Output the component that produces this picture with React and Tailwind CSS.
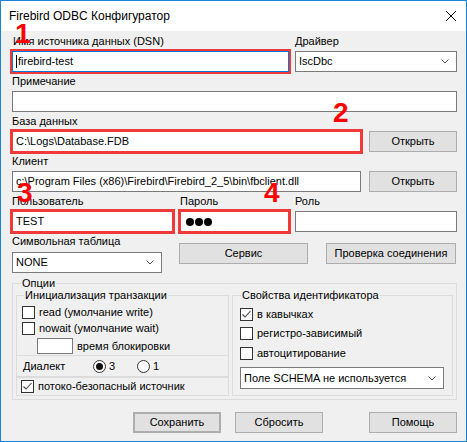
import React from "react";

const Label = ({ children, className = "" }) => (
  <div className={`h-[13px] leading-[13px] whitespace-nowrap ${className}`}>{children}</div>
);

const TextBox = ({ children, className = "" }) => (
  <div
    className={`h-[21px] bg-white border border-[#7a7a7a] pl-[3px] flex items-center whitespace-nowrap overflow-hidden ${className}`}
  >
    {children}
  </div>
);

const Button = ({ children, className = "" }) => (
  <div
    className={`h-[21px] bg-[#e1e1e1] border border-[#adadad] flex items-center justify-center whitespace-nowrap ${className}`}
  >
    {children}
  </div>
);

const Chevron = () => (
  <svg width="8" height="5" viewBox="0 0 8 5">
    <path d="M0.5 0.5 L4 4 L7.5 0.5" fill="none" stroke="#555" strokeWidth="1" />
  </svg>
);

const Select = ({ value, className = "" }) => (
  <div
    className={`h-[21px] bg-white border border-[#7a7a7a] pl-[3px] pr-[7px] flex items-center justify-between ${className}`}
  >
    <span>{value}</span>
    <Chevron />
  </div>
);

const Checkbox = ({ checked }) => (
  <div className="w-[13px] h-[13px] shrink-0 border border-[#333] bg-white flex items-center justify-center">
    {checked && (
      <svg width="11" height="11" viewBox="0 0 11 11">
        <path d="M1.5 5.5 L4 8 L9.5 2" fill="none" stroke="#444" strokeWidth="1.1" />
      </svg>
    )}
  </div>
);

const Radio = ({ checked }) => (
  <div className="w-[13px] h-[13px] shrink-0 rounded-full border border-[#333] bg-white flex items-center justify-center">
    {checked && <div className="w-[7px] h-[7px] rounded-full bg-[#111]" />}
  </div>
);

const Check = ({ checked, children }) => (
  <div className="h-[13px] flex items-center gap-[4px] leading-[13px] whitespace-nowrap">
    <Checkbox checked={checked} />
    <span>{children}</span>
  </div>
);

const Marker = ({ n, className }) => (
  <span
    className={`absolute text-[28px] leading-[28px] font-bold text-[#ff0000] font-['Liberation_Sans',Arial,sans-serif] ${className}`}
  >
    {n}
  </span>
);

export default function App() {
  return (
    <div className="relative w-[467px] h-[442px] border border-[#1883d7] flex flex-col text-[11px] text-black font-['Liberation_Sans',Arial,sans-serif] overflow-hidden">
      {/* Title bar */}
      <div className="h-[30px] shrink-0 bg-white flex items-center justify-between pl-[8px] pr-[10px]">
        <span className="text-[12px]">Firebird ODBC Конфигуратор</span>
        <svg width="10" height="10" viewBox="0 0 10 10">
          <path d="M0 0 L10 10 M10 0 L0 10" stroke="#000" strokeWidth="1" />
        </svg>
      </div>

      {/* Body */}
      <div className="flex-1 bg-[#f0f0f0] pl-[11px] pr-[9px] pt-[4px]">
        <div className="flex flex-col gap-[3px]">
          <div className="flex gap-[6px]">
            <div className="w-[277px]">
              <Label className="pl-px">Имя источника данных (DSN)</Label>
              <TextBox className="mt-[3px] border-[#0078d7] outline-2 outline-[#f03a3a]">
                <span className="w-px h-[13px] bg-black mr-px" />
                firebird-test
              </TextBox>
            </div>
            <div className="flex-1">
              <Label>Драйвер</Label>
              <Select className="mt-[3px]" value="IscDbc" />
            </div>
          </div>

          <div>
            <Label>Примечание</Label>
            <TextBox className="mt-[3px]" />
          </div>

          <div>
            <Label>База данных</Label>
            <div className="mt-[3px] flex gap-[8px]">
              <TextBox className="flex-1 outline-[3px] outline-[#f03a3a] -outline-offset-1">
                {"C:\\Logs\\Database.FDB"}
              </TextBox>
              <Button className="w-[88px]">Открыть</Button>
            </div>
          </div>

          <div>
            <Label>Клиент</Label>
            <div className="mt-[3px] flex gap-[8px]">
              <TextBox className="flex-1">
                {"c:\\Program Files (x86)\\Firebird\\Firebird_2_5\\bin\\fbclient.dll"}
              </TextBox>
              <Button className="w-[88px]">Открыть</Button>
            </div>
          </div>

          <div className="flex">
            <div className="w-[161px]">
              <Label>Пользователь</Label>
              <TextBox className="mt-[3px] outline-[3px] outline-[#f03a3a] -outline-offset-1">TEST</TextBox>
            </div>
            <div className="w-[109px] ml-[7px]">
              <Label>Пароль</Label>
              <TextBox className="mt-[3px] pl-[5px] gap-[1px] outline-[3px] outline-[#f03a3a] -outline-offset-1">
                <span className="w-[8px] h-[8px] rounded-full bg-black" />
                <span className="w-[8px] h-[8px] rounded-full bg-black" />
                <span className="w-[8px] h-[8px] rounded-full bg-black" />
              </TextBox>
            </div>
            <div className="flex-1 ml-[6px]">
              <Label>Роль</Label>
              <TextBox className="mt-[3px]" />
            </div>
          </div>

          <div className="flex items-start">
            <div className="w-[150px]">
              <Label>Символьная таблица</Label>
              <Select className="mt-[4px]" value="NONE" />
            </div>
            <Button className="ml-[17px] w-[129px] mt-[8px]">Сервис</Button>
            <Button className="ml-[18px] w-[130px] mt-[8px]">Проверка соединения</Button>
          </div>
        </div>

        {/* Options */}
        <fieldset className="mt-[4px] border border-[#dcdcdc]">
          <legend className="ml-[8px] px-px leading-[13px]">Опции</legend>
          <div className="-mt-px px-[3px] pb-[3px] flex gap-[3px]">
            <div className="w-[213px] flex flex-col">
              <fieldset className="border border-[#dcdcdc]">
                <legend className="ml-[7px] px-px leading-[13px]">Инициализация транзакции</legend>
                <div className="pl-[5px] pt-[4px] pb-[1px] flex flex-col gap-[3px]">
                  <Check>read (умолчание write)</Check>
                  <Check>nowait (умолчание wait)</Check>
                  <div className="h-[16px] flex items-center">
                    <div className="ml-[15px] w-[36px] h-[16px] bg-white border border-[#7a7a7a]" />
                    <span className="ml-[4px]">время блокировки</span>
                  </div>
                </div>
              </fieldset>
              <div className="h-[21px] border-x border-b border-[#dcdcdc] flex items-center pl-[6px]">
                <span className="w-[70px]">Диалект</span>
                <div className="w-[44px] flex items-center gap-[3px]">
                  <Radio checked />
                  <span>3</span>
                </div>
                <div className="flex items-center gap-[3px]">
                  <Radio />
                  <span>1</span>
                </div>
              </div>
              <div className="h-[19px] border border-[#dcdcdc] flex items-center pl-[4px]">
                <Check checked>потоко-безопасный источник</Check>
              </div>
            </div>

            <fieldset className="flex-1 border border-[#dcdcdc]">
              <legend className="ml-[8px] px-px leading-[13px]">Свойства идентификатора</legend>
              <div className="pl-[7px] pt-[6px] pb-[6px] flex flex-col">
                <Check checked>в кавычках</Check>
                <div className="mt-[6px]">
                  <Check>регистро-зависимый</Check>
                </div>
                <div className="mt-[7px]">
                  <Check>автоцитирование</Check>
                </div>
                <Select className="mt-[7px] w-[204px] h-[22px]" value="Поле SCHEMA не используется" />
              </div>
            </fieldset>
          </div>
        </fieldset>

        {/* Footer buttons */}
        <div className="mt-[12px] flex justify-end">
          <Button className="w-[88px] border-2 border-[#0078d7]">Сохранить</Button>
          <Button className="w-[88px] ml-[14px]">Сбросить</Button>
          <Button className="w-[88px] ml-[46px]">Помощь</Button>
        </div>
      </div>

      {/* Red annotation numbers */}
      <Marker n="1" className="left-[14px] top-[19px]" />
      <Marker n="2" className="left-[332px] top-[98px]" />
      <Marker n="3" className="left-[16px] top-[178px]" />
      <Marker n="4" className="left-[263px] top-[178px]" />
    </div>
  );
}
